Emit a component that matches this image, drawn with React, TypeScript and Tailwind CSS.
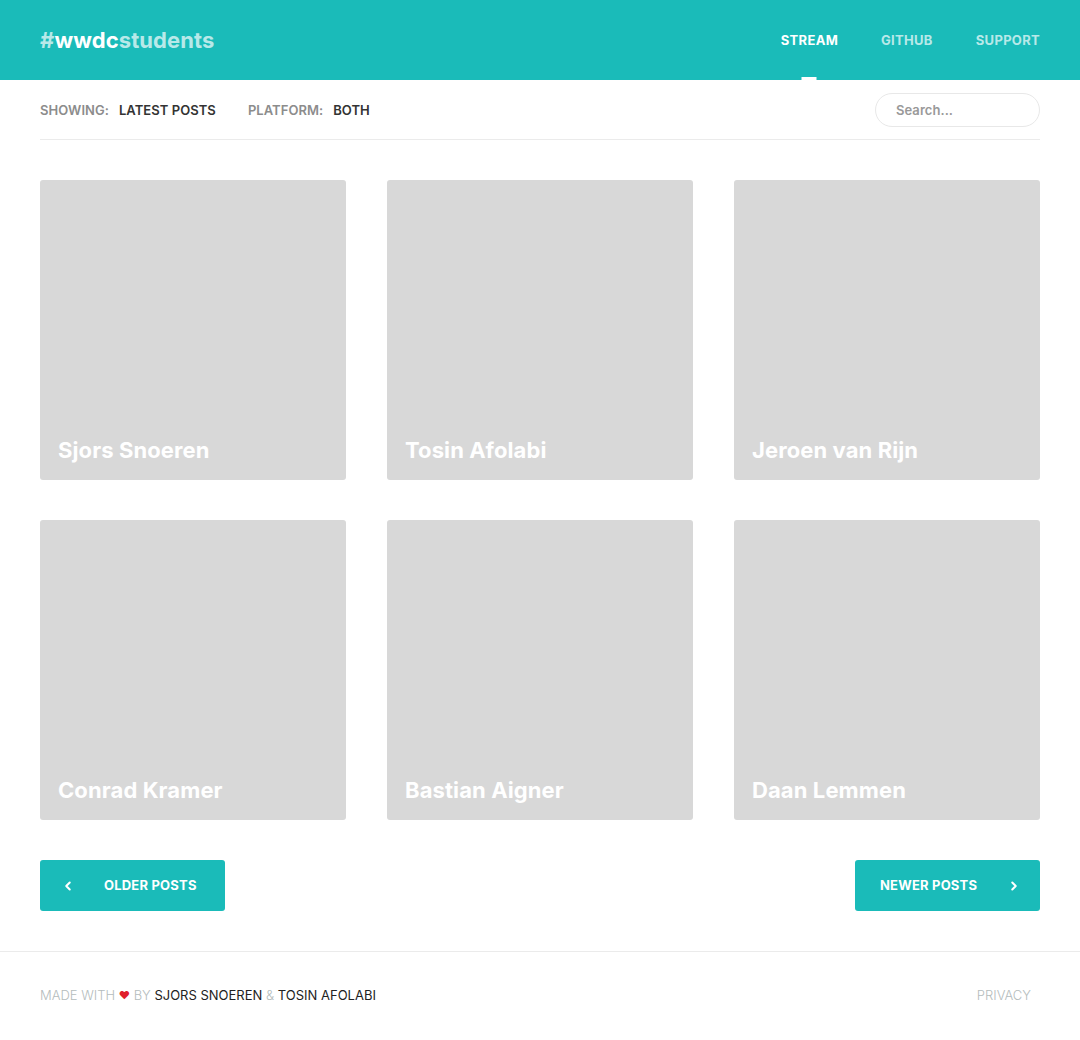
import { ChevronLeft, ChevronRight } from 'lucide-react';

const posts = [
  'Sjors Snoeren',
  'Tosin Afolabi',
  'Jeroen van Rijn',
  'Conrad Kramer',
  'Bastian Aigner',
  'Daan Lemmen',
];

const App = () => {
  return (
    <div className="min-h-screen bg-white font-['Inter','Lato',sans-serif]">
      {/* Header */}
      <header className="h-[80px] bg-[#1abbb9] px-10 flex items-center justify-between">
        <a className="text-[22px] font-bold tracking-[0.1px] text-white">
          <span className="text-white/70">#</span>
          <span>wwdc</span>
          <span className="text-white/70">students</span>
        </a>
        <nav className="flex items-stretch h-full gap-[43px] text-[13px] tracking-[0.3px] font-bold">
          <a className="relative flex items-center text-white pt-[1px]">
            STREAM
            <span className="absolute bottom-0 left-1/2 -translate-x-1/2 w-[15px] h-[3px] bg-white" />
          </a>
          <a className="flex items-center text-white/70 pt-[1px]">GITHUB</a>
          <a className="flex items-center text-white/70 pt-[1px]">SUPPORT</a>
        </nav>
      </header>

      <main className="px-10">
        {/* Filters */}
        <div className="h-[60px] flex items-center justify-between border-b border-[#ebebeb] text-[13px] tracking-[0.05px] font-semibold">
          <div className="flex items-center pt-[2px]">
            <span className="text-[#8c8c8c]">SHOWING:</span>
            <span className="ml-[10px] text-[#333]">LATEST POSTS</span>
            <span className="ml-[32px] text-[#8c8c8c]">PLATFORM:</span>
            <span className="ml-[10px] text-[#333]">BOTH</span>
          </div>
          <input
            placeholder="Search..."
            className="w-[165px] h-[34px] rounded-full border border-[#e8e8e8] px-5 text-[13px] font-semibold text-[#333] placeholder:text-[#999] outline-none"
          />
        </div>

        {/* Posts */}
        <div className="grid grid-cols-3 gap-x-[41px] gap-y-10 pt-10">
          {posts.map((name) => (
            <div key={name} className="h-[300px] rounded-[3px] bg-[#d8d8d8] flex items-end px-[18px] pb-[13px]">
              <h2 className="text-[22px] font-bold tracking-[0.1px] text-white">{name}</h2>
            </div>
          ))}
        </div>

        {/* Pagination */}
        <div className="flex justify-between pt-10 pb-10">
          <button className="w-[185px] h-[51px] rounded-[3px] bg-[#1abbb9] flex items-center text-white text-[13px] tracking-[0.2px] font-bold pt-[1px]">
            <ChevronLeft className="ml-[21px] w-[14px] h-[14px]" strokeWidth={3.5} />
            <span className="ml-[29px]">OLDER POSTS</span>
          </button>
          <button className="w-[185px] h-[51px] rounded-[3px] bg-[#1abbb9] flex items-center text-white text-[13px] tracking-[0.2px] font-bold pt-[1px]">
            <span className="ml-[25px]">NEWER POSTS</span>
            <ChevronRight className="ml-auto mr-[19px] w-[14px] h-[14px]" strokeWidth={3.5} />
          </button>
        </div>
      </main>

      {/* Footer */}
      <footer className="border-t border-[#ebebeb] h-[88px] pl-10 pr-[49px] flex items-center justify-between text-[13px] font-light">
        <p className="text-[#b4bcbc]">
          MADE WITH <span className="text-[11px] text-[#e0202c]">♥</span> BY{' '}
          <span className="font-normal text-[#222]">SJORS SNOEREN</span> &amp;{' '}
          <span className="font-normal text-[#222]">TOSIN AFOLABI</span>
        </p>
        <a className="text-[#b4bcbc]">PRIVACY</a>
      </footer>
    </div>
  );
};

export default App;
